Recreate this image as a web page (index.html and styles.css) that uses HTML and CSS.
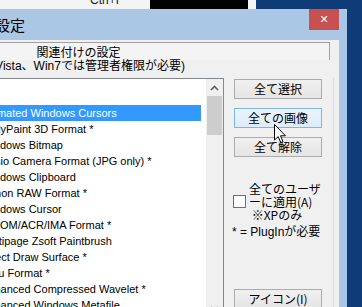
FILE: index.html
```html
<!DOCTYPE html>
<html lang="ja">
<head>
    <meta charset="UTF-8">
    <title>設定</title>
    <link rel="stylesheet" href="styles.css">
</head>
<body>

    <!-- window behind the dialog -->
    <div class="behind">
        <div class="behindLeft"><span class="shortcut">Ctrl+F</span></div>
        <div class="behindBlack"></div>
        <div class="behindWhite"></div>
    </div>

    <div class="win">
        <div class="titleBar">
            <span class="title">設定</span>
            <span class="closeBtn">✕</span>
        </div>

        <div class="client">
            <div class="page">
                <div class="pageHead">関連付けの設定</div>
                <div class="note">(Vista、Win7では管理者権限が必要)</div>

                <div class="panel">
                    <div class="listBox">
                        <div class="items">
                            <div class="item selected">Animated Windows Cursors</div>
                            <div class="item">BodyPaint 3D Format *</div>
                            <div class="item">Windows Bitmap</div>
                            <div class="item">Casio Camera Format (JPG only) *</div>
                            <div class="item">Windows Clipboard</div>
                            <div class="item">Canon RAW Format *</div>
                            <div class="item">Windows Cursor</div>
                            <div class="item">DICOM/ACR/IMA Format *</div>
                            <div class="item">Multipage Zsoft Paintbrush</div>
                            <div class="item">Direct Draw Surface *</div>
                            <div class="item">DjVu Format *</div>
                            <div class="item">Enhanced Compressed Wavelet *</div>
                            <div class="item">Enhanced Windows Metafile</div>
                        </div>
                        <div class="scrollBar">
                            <div class="arrowBtn">
                                <svg width="9" height="6" viewBox="0 0 9 6"><path d="M1 5 L4.5 1.5 L8 5" fill="none" stroke="#606060" stroke-width="1.6"/></svg>
                            </div>
                            <div class="thumb"></div>
                            <div class="track"></div>
                            <div class="arrowBtn">
                                <svg width="9" height="6" viewBox="0 0 9 6"><path d="M1 1 L4.5 4.5 L8 1" fill="none" stroke="#606060" stroke-width="1.6"/></svg>
                            </div>
                        </div>
                    </div>

                    <div class="side">
                        <button class="btn">全て選択</button>
                        <button class="btn hover">全ての画像</button>
                        <button class="btn">全て解除</button>

                        <label class="check">
                            <span class="box"></span>
                            <span class="checkText">全てのユーザ<br>ーに適用(A)<br>&nbsp;※XPのみ</span>
                        </label>
                        <p class="plugin">* = PlugInが必要</p>

                        <button class="btn iconBtn">アイコン(I)</button>
                    </div>
                </div>
            </div>
        </div>
    </div>

    <!-- mouse pointer over the hovered button -->
    <svg class="cursor" width="13" height="20" viewBox="0 0 13 20">
        <path d="M0.5 0.5 L0.5 16 L4.2 12.6 L6.8 18.6 L9 17.6 L6.5 11.8 L11.5 11.8 Z" fill="#fff" stroke="#000" stroke-width="1"/>
    </svg>

</body>
</html>
```

FILE: styles.css
```css
body{
    margin: 0;
    padding: 0;
    width: 362px;
    height: 307px;
    overflow: hidden;
    background-color: #0f3b77;
    font-family: "Liberation Sans", "Noto Sans CJK JP", sans-serif;
    font-size: 12px;
    color: #000;
    position: relative;
}

.behind {
    display: flex;
    height: 9px;
    overflow: hidden;
}
.behindLeft {
    width: 150px;
    background-color: #f4f4f4;
}
.shortcut {
    display: block;
    padding-left: 90px;
    margin-top: -6px;
    line-height: 12px;
    color: #222;
}
.behindBlack {
    width: 98px;
    background-color: #000;
}
.behindWhite {
    width: 8px;
    background-color: #f4f4f4;
}

.win {
    margin-left: -172px;
    width: 519px;
    background-color: #aac7e6;
    padding-right: 8px;
    box-sizing: border-box;
    height: 298px;
    display: flex;
    flex-direction: column;
}

.titleBar {
    height: 31px;
    display: flex;
    justify-content: space-between;
    align-items: flex-start;
}
.title {
    font-family: "Noto Sans CJK JP", sans-serif;
    font-size: 15px;
    line-height: 31px;
    padding-left: 167px;
    color: #000;
}
.closeBtn {
    width: 30px;
    height: 21px;
    background-color: #c75050;
    color: #fff;
    font-size: 11px;
    line-height: 21px;
    text-align: center;
    font-family: "DejaVu Sans", sans-serif;
}

.client {
    flex: 1;
    background-color: #f0f0f0;
    padding-top: 2px;
}

.page {
    width: 502px;
}

.pageHead {
    border-top: 1px solid #a0a0a0;
    border-right: 1px solid #a0a0a0;
    background-color: #f4f4f4;
    height: 17px;
    line-height: 18px;
    text-align: center;
    font-family: "Noto Sans CJK JP", sans-serif;
}

.note {
    text-align: center;
    line-height: 13px;
    padding-left: 18px;
    height: 18px;
    white-space: nowrap;
}

.panel {
    display: flex;
    gap: 10px;
    border-right: 1px solid #dcdcdc;
    margin-right: -4px;
    height: 229px;
}

.listBox {
    width: 396px;
    height: 240px;
    background-color: #fff;
    border: 1px solid #828790;
    display: flex;
    box-sizing: border-box;
}
.items {
    flex: 1;
    padding-top: 26px;
    margin-right: 5px;
    font-size: 11px;
}
.item {
    height: 16px;
    line-height: 16px;
    padding-left: 152px;
    white-space: nowrap;
}
.selected {
    background-color: #3399ff;
    color: #fff;
}

.scrollBar {
    width: 17px;
    background-color: #f0f0f0;
    display: flex;
    flex-direction: column;
}
.arrowBtn {
    height: 17px;
    display: flex;
    align-items: center;
    justify-content: center;
}
.thumb {
    height: 39px;
    margin: 0 1px;
    background-color: #cdcdcd;
}
.track {
    flex: 1;
}

.side {
    width: 88px;
    padding-top: 1px;
    display: flex;
    flex-direction: column;
}

.btn {
    width: 88px;
    height: 21px;
    margin-bottom: 9px;
    padding: 0;
    border: 1px solid #acacac;
    background: linear-gradient(#f0f0f0, #e5e5e5);
    font-family: "Noto Sans CJK JP", sans-serif;
    font-size: 12px;
    line-height: 18px;
    color: #000;
}
.hover {
    border-color: #7eb4ea;
    background: linear-gradient(#ecf4fc, #dcecfc);
}

.check {
    display: flex;
    align-items: center;
    gap: 3px;
    margin-top: 16px;
    margin-left: -1px;
}
.box {
    width: 11px;
    height: 11px;
    border: 1px solid #707070;
    background-color: #fff;
}
.checkText {
    font-family: "Noto Sans CJK JP", sans-serif;
    line-height: 13px;
}

.plugin {
    margin: 5px 0 0 -2px;
    line-height: 13px;
    white-space: nowrap;
}

.iconBtn {
    margin-top: 50px;
}

.cursor {
    position: absolute;
    left: 274px;
    top: 124px;
}
```
